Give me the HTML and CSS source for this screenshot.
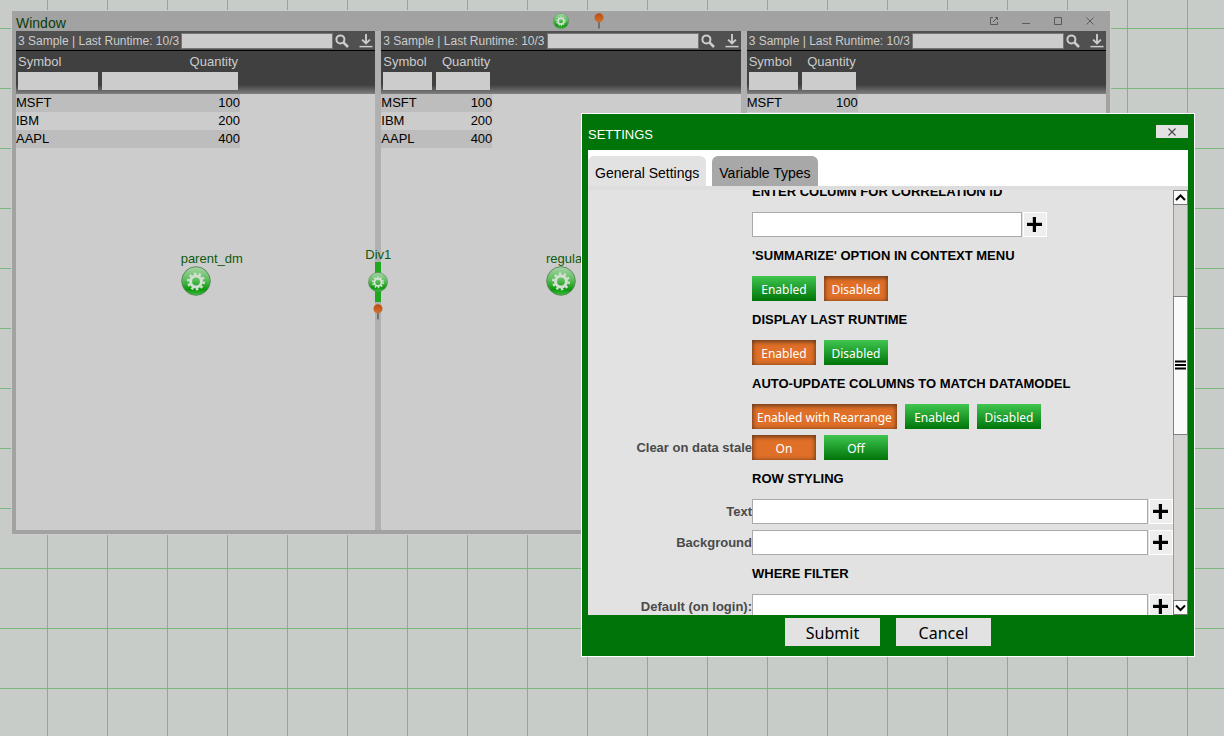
FILE: index.html
```html
<!DOCTYPE html>
<html lang="en">
<head>
<meta charset="utf-8">
<title>Window</title>
<link rel="stylesheet" href="styles.css">
</head>
<body>
<svg class="defs" aria-hidden="true">
  <defs>
    <linearGradient id="green" x1="0" y1="0" x2="0" y2="1">
      <stop offset="0" stop-color="#a9d3a9"/>
      <stop offset=".45" stop-color="#5bc05b"/>
      <stop offset=".8" stop-color="#0c980c"/>
      <stop offset="1" stop-color="#3fc03f"/>
    </linearGradient>
    <linearGradient id="orange" x1="0" y1="0" x2="0" y2="1">
      <stop offset="0" stop-color="#bd4a10"/>
      <stop offset="1" stop-color="#d2722f"/>
    </linearGradient>
    <symbol id="gear" viewBox="0 0 30 30">
      <circle cx="15" cy="15" r="14.3" fill="url(#green)" stroke="#5f8a5f" stroke-width="1"/>
      <circle cx="15" cy="15.5" r="5.4" fill="none" stroke="#d3dfd3" stroke-width="3"/>
      <circle cx="15" cy="15.5" r="7.7" fill="none" stroke="#d3dfd3" stroke-width="2.6" stroke-dasharray="2.42 2.42"/>
    </symbol>
    <symbol id="pin" viewBox="0 0 10 16">
      <path d="M5 8V15.5" stroke="#5a5a5a" stroke-width="1.4"/>
      <circle cx="5" cy="4.8" r="4.5" fill="url(#orange)"/>
    </symbol>
    <symbol id="search" viewBox="0 0 14 14">
      <circle cx="5.4" cy="5.4" r="4" fill="none" stroke="currentColor" stroke-width="2"/>
      <path d="M8.4 8.4L13 13" stroke="currentColor" stroke-width="2.6"/>
    </symbol>
    <symbol id="download" viewBox="0 0 14 15">
      <path d="M7 0V10M2.8 6L7 10.2L11.2 6" fill="none" stroke="currentColor" stroke-width="2"/>
      <path d="M0 13.5H14" stroke="currentColor" stroke-width="1.6"/>
    </symbol>
    <symbol id="plus" viewBox="0 0 16 16">
      <path d="M7 0V15M0 7H15" stroke="#bbb" stroke-width="4"/>
      <path d="M7.5 0V15M0 7.5H15" stroke="#000" stroke-width="3"/>
    </symbol>
    <symbol id="close" viewBox="0 0 8 8">
      <path d="M.5 .5L7.5 7.5M7.5 .5L.5 7.5" stroke="currentColor" stroke-width="1.1"/>
    </symbol>
  </defs>
</svg>

<main class="desktop">
  <section class="window" aria-label="Window">
    <header class="titlebar">
      <span>Window</span>
      <div class="title-tools">
        <svg class="gear-small"><use href="#gear"/></svg>
        <svg class="pin"><use href="#pin"/></svg>
      </div>
      <div class="controls">
        <button type="button" aria-label="Pop out"><svg viewBox="0 0 10 10"><path d="M4 1.5H1.5V8.5H8.5V6M6 1.5H8.5V4M8.5 1.5L4 6" fill="none" stroke="currentColor"/></svg></button>
        <button type="button" aria-label="Minimize"><svg viewBox="0 0 10 10"><path d="M1 7.5H9" stroke="currentColor"/></svg></button>
        <button type="button" aria-label="Maximize"><svg viewBox="0 0 10 10"><path d="M1.5 1.5H8.5V8.5H1.5Z" fill="none" stroke="currentColor"/></svg></button>
        <button type="button" aria-label="Close window"><svg viewBox="0 0 10 10"><path d="M1.5 1.5L8.5 8.5M8.5 1.5L1.5 8.5" stroke="currentColor"/></svg></button>
      </div>
    </header>
    <div class="panels">
      <article class="panel">
        <div class="panel-head">
          <span class="panel-title">3 Sample | Last Runtime: 10/3</span>
          <input type="text" aria-label="Search">
          <button type="button" aria-label="Find"><svg><use href="#search"/></svg></button>
          <button type="button" aria-label="Download"><svg><use href="#download"/></svg></button>
        </div>
        <div class="grid-area">
          <table class="data wide">
            <thead>
              <tr><th>Symbol</th><th class="num">Quantity</th></tr>
              <tr><td><input type="text" aria-label="Filter symbol"></td><td><input type="text" aria-label="Filter quantity"></td></tr>
            </thead>
            <tbody>
              <tr><td>MSFT</td><td class="num">100</td></tr>
              <tr><td>IBM</td><td class="num">200</td></tr>
              <tr><td>AAPL</td><td class="num">400</td></tr>
            </tbody>
          </table>
        </div>
        <div class="node"><span>parent_dm</span><svg class="gear-large"><use href="#gear"/></svg></div>
      </article>
      <div class="divider">
        <div class="divider-node">
          <span>Div1</span>
          <div class="grip"><svg class="gear-medium"><use href="#gear"/></svg></div>
          <svg class="pin"><use href="#pin"/></svg>
        </div>
      </div>
      <article class="panel">
        <div class="panel-head">
          <span class="panel-title">3 Sample | Last Runtime: 10/3</span>
          <input type="text" aria-label="Search">
          <button type="button" aria-label="Find"><svg><use href="#search"/></svg></button>
          <button type="button" aria-label="Download"><svg><use href="#download"/></svg></button>
        </div>
        <div class="grid-area">
          <table class="data">
            <thead>
              <tr><th>Symbol</th><th class="num">Quantity</th></tr>
              <tr><td><input type="text" aria-label="Filter symbol"></td><td><input type="text" aria-label="Filter quantity"></td></tr>
            </thead>
            <tbody>
              <tr><td>MSFT</td><td class="num">100</td></tr>
              <tr><td>IBM</td><td class="num">200</td></tr>
              <tr><td>AAPL</td><td class="num">400</td></tr>
            </tbody>
          </table>
        </div>
        <div class="node"><span>regular</span><svg class="gear-large"><use href="#gear"/></svg></div>
      </article>
      <div class="divider"></div>
      <article class="panel">
        <div class="panel-head">
          <span class="panel-title">3 Sample | Last Runtime: 10/3</span>
          <input type="text" aria-label="Search">
          <button type="button" aria-label="Find"><svg><use href="#search"/></svg></button>
          <button type="button" aria-label="Download"><svg><use href="#download"/></svg></button>
        </div>
        <div class="grid-area">
          <table class="data">
            <thead>
              <tr><th>Symbol</th><th class="num">Quantity</th></tr>
              <tr><td><input type="text" aria-label="Filter symbol"></td><td><input type="text" aria-label="Filter quantity"></td></tr>
            </thead>
            <tbody>
              <tr><td>MSFT</td><td class="num">100</td></tr>
            </tbody>
          </table>
        </div>
      </article>
    </div>
  </section>

  <section class="dialog" role="dialog" aria-labelledby="dialog-title">
    <header class="dialog-head">
      <span id="dialog-title">SETTINGS</span>
      <button type="button" aria-label="Close settings"><svg><use href="#close"/></svg></button>
    </header>
    <div class="tabs" role="tablist">
      <button type="button" role="tab" class="tab active" aria-selected="true">General Settings</button>
      <button type="button" role="tab" class="tab" aria-selected="false">Variable Types</button>
    </div>
    <div class="dialog-body">
      <div class="viewport">
        <form class="form">
          <label class="heading" for="correlation">ENTER COLUMN FOR CORRELATION ID</label>
          <div class="field">
            <input class="short" type="text" id="correlation">
            <button type="button" class="add" aria-label="Add correlation column"><svg><use href="#plus"/></svg></button>
          </div>
          <div class="heading">'SUMMARIZE' OPTION IN CONTEXT MENU</div>
          <div class="field toggles" role="group" aria-label="Summarize option">
            <button type="button" class="toggle">Enabled</button>
            <button type="button" class="toggle on" aria-pressed="true">Disabled</button>
          </div>
          <div class="heading">DISPLAY LAST RUNTIME</div>
          <div class="field toggles" role="group" aria-label="Display last runtime">
            <button type="button" class="toggle on" aria-pressed="true">Enabled</button>
            <button type="button" class="toggle">Disabled</button>
          </div>
          <div class="heading">AUTO-UPDATE COLUMNS TO MATCH DATAMODEL</div>
          <div class="field toggles" role="group" aria-label="Auto-update columns">
            <button type="button" class="toggle on" aria-pressed="true">Enabled with Rearrange</button>
            <button type="button" class="toggle">Enabled</button>
            <button type="button" class="toggle">Disabled</button>
          </div>
          <span class="label" id="stale">Clear on data stale</span>
          <div class="field toggles" role="group" aria-labelledby="stale">
            <button type="button" class="toggle on" aria-pressed="true">On</button>
            <button type="button" class="toggle">Off</button>
          </div>
          <div class="heading">ROW STYLING</div>
          <label class="label" for="row-text">Text</label>
          <div class="field">
            <input type="text" id="row-text">
            <button type="button" class="add" aria-label="Edit text style"><svg><use href="#plus"/></svg></button>
          </div>
          <label class="label" for="row-bg">Background</label>
          <div class="field">
            <input type="text" id="row-bg">
            <button type="button" class="add" aria-label="Edit background style"><svg><use href="#plus"/></svg></button>
          </div>
          <div class="heading">WHERE FILTER</div>
          <label class="label" for="where">Default (on login):</label>
          <div class="field">
            <input type="text" id="where">
            <button type="button" class="add" aria-label="Edit default filter"><svg><use href="#plus"/></svg></button>
          </div>
        </form>
      </div>
      <div class="scrollbar">
        <button type="button" aria-label="Scroll up"><svg viewBox="0 0 13 13"><path d="M2 9L6.5 4.5L11 9" fill="none" stroke="#000" stroke-width="2"/></svg></button>
        <div class="track before"></div>
        <div class="thumb"><svg viewBox="0 0 11 10"><path d="M0 1.5H11M0 5H11M0 8.5H11" stroke="#000" stroke-width="1.8"/></svg></div>
        <div class="track after"></div>
        <button type="button" aria-label="Scroll down"><svg viewBox="0 0 13 13"><path d="M2 4.5L6.5 9L11 4.5" fill="none" stroke="#000" stroke-width="2"/></svg></button>
      </div>
    </div>
    <footer class="dialog-foot">
      <button type="button">Submit</button>
      <button type="button">Cancel</button>
    </footer>
  </section>
</main>
</body>
</html>
```

FILE: styles.css
```css
* { box-sizing: border-box; }

body {
  margin: 0;
  font-family: "Liberation Sans", Arial, sans-serif;
  font-size: 13px;
  color: #000;
}

button, input { font: inherit; margin: 0; padding: 0; border: 0; border-radius: 0; }
button { background: none; color: inherit; }
svg { display: block; flex: none; }
.defs { position: absolute; width: 0; height: 0; }

.desktop {
  position: relative;
  height: 100vh;
  min-height: 680px;
  overflow: hidden;
  background-color: #c8ccc8;
  background-image:
    linear-gradient(90deg, #7ab87e 0 1px, transparent 1px 60px),
    linear-gradient(180deg, #7ab87e 0 1px, transparent 1px 60px);
  background-size: 60px 60px;
  background-position: 47px 28px;
}

/* Desktop window */
.window {
  position: absolute;
  top: 11px;
  left: 12px;
  right: 114px;
  bottom: 202px;
  display: flex;
  flex-direction: column;
  padding: 0 4px 4px;
  background: #a2a2a2;
  box-shadow: 0 0 0 1px #cacdca;
}

.titlebar {
  display: grid;
  grid-template-columns: 1fr auto 1fr;
  height: 20px;
  align-items: center;
  font-size: 14px;
  color: #0b3d0b;
}
.titlebar > span { padding-top: 4px; }
.title-tools { display: flex; align-items: center; gap: 25px; padding-left: 34px; }
.gear-small { width: 16px; height: 16px; }
.gear-medium { width: 20px; height: 20px; }
.gear-large { width: 30px; height: 30px; }
.pin { width: 10px; height: 16px; }
.controls { display: flex; justify-content: flex-end; gap: 22px; padding-right: 11px; color: #5c5c5c; }
.controls svg { width: 10px; height: 10px; }

.panels { display: flex; flex: 1; min-height: 0; }
.panel { position: relative; flex: 1; min-width: 0; background: #ccc; }

.panel-head {
  display: flex;
  align-items: center;
  height: 20px;
  padding: 0 2px;
  background: #505050;
  border-bottom: 1px solid #000;
  color: #ccc;
}
.panel-title { flex: 1; min-width: 0; overflow: hidden; white-space: nowrap; font-size: 12px; }
.panel-head input {
  width: 152px;
  height: 16px;
  background: #ccc;
  border: 1px solid #777;
}
.panel-head button { margin-left: 2px; }
.panel-head button + button { margin-left: 10px; }
.panel-head svg { width: 14px; height: 14px; }

.grid-area {
  background: linear-gradient(#404040 34px, #808080 43px) no-repeat;
  background-size: 100% 43px;
}
.data { width: 111px; table-layout: fixed; border-collapse: collapse; line-height: 18px; }
.data.wide { width: 224px; }
.data th, .data td { padding: 0; height: 18px; text-align: left; }
.data th { width: 53px; height: 21px; padding: 0 2px; font-weight: normal; color: #ccc; }
.data th + th { width: 58px; }
.data.wide th { width: 84px; }
.data.wide th + th { width: 140px; }
.data thead td { height: 22px; padding: 0 2px 4px; line-height: 0; }
.data input { width: 100%; height: 18px; background: #ccc; }
.data .num { text-align: right; }
.data tbody tr:nth-child(odd) { background: #bdbdbd; }

.divider { position: relative; z-index: 1; width: 6px; background: #b0b0b0; }

/* Model markers drawn over the panels */
.node {
  position: absolute;
  top: calc(50% - 30px);
  left: calc(50% - 15px);
  line-height: 15px;
  color: #0e5a0e;
}
.divider-node {
  position: absolute;
  top: calc(50% - 34px);
  left: 50%;
  transform: translateX(-50%);
  display: flex;
  flex-direction: column;
  align-items: center;
  line-height: 15px;
  color: #0e5a0e;
}
.grip {
  display: flex;
  align-items: center;
  justify-content: center;
  width: 6px;
  height: 40px;
  margin-bottom: 2px;
  background: #1fa81f;
}

/* Settings dialog */
.dialog {
  position: absolute;
  z-index: 2;
  top: 113px;
  right: 29px;
  bottom: 79px;
  width: 614px;
  display: flex;
  flex-direction: column;
  padding: 0 6px;
  border: 1px solid #fff;
  background: #007409;
}
.dialog-head {
  display: flex;
  align-items: center;
  justify-content: space-between;
  height: 36px;
  padding-top: 4px;
  color: #fff;
}
.dialog-head button {
  display: flex;
  align-items: center;
  justify-content: center;
  width: 32px;
  height: 13px;
  margin-bottom: 5px;
  background: #e2e2e2;
  color: #444;
}
.dialog-head svg { width: 8px; height: 8px; }

.tabs {
  display: flex;
  gap: 6px;
  padding-top: 6px;
  background: #fff;
  border-bottom: 4px solid #ddd;
}
.tab {
  height: 30px;
  padding: 4px 7px 0;
  border-radius: 6px 6px 0 0;
  background: #a8a8a8;
  font-size: 14px;
}
.tab.active { background: #e2e2e2; }

.dialog-body { display: flex; flex: 1; min-height: 0; background: #e2e2e2; }
.viewport { flex: 1; min-width: 0; overflow: hidden; }
/* Scrolled position of the form */
.form {
  display: grid;
  grid-template-columns: 164px 1fr;
  row-gap: 6px;
  margin-top: -11px;
}
.heading { grid-column: 2; height: 27px; line-height: 25px; font-weight: bold; }
.label { line-height: 25px; text-align: right; font-weight: bold; color: #4a4a4a; }
.field { grid-column: 2; display: flex; gap: 1px; height: 25px; }
.field input { flex: 1; min-width: 0; background: #fff; border: 1px solid #aaa; }
.field input.short { flex: 0 0 270px; }
.add {
  display: flex;
  align-items: center;
  justify-content: center;
  width: 24px;
  background: #eee;
  border: 1px solid #fff;
}
.add svg { width: 16px; height: 16px; }

.toggles { gap: 8px; }
.toggle {
  min-width: 64px;
  padding: 2px 5px 0;
  background: linear-gradient(#40c650, #007409);
  color: #fff;
  font-family: "Noto Sans", Tahoma, sans-serif;
  font-size: 12px;
}
.toggle.on { background: #e07028; box-shadow: inset 0 1px 4px 1px #6b3a1a; }

.scrollbar { display: flex; flex-direction: column; width: 15px; }
.scrollbar button {
  display: flex;
  height: 15px;
  background: #fafafa;
  border: 1px solid #777;
}
.scrollbar button svg { width: 13px; height: 13px; }
.track { background: #d5d3d1; border: 1px solid #999; border-width: 0 1px; }
.before { flex: 91; }
.after { flex: 166; }
.thumb {
  display: flex;
  flex: 138;
  align-items: center;
  justify-content: center;
  background: #fafafa;
  border: 1px solid #808080;
}
.thumb svg { width: 11px; height: 10px; }

.dialog-foot { display: flex; justify-content: center; gap: 16px; padding: 3px 0 10px; }
.dialog-foot button {
  width: 95px;
  height: 28px;
  padding-top: 2px;
  background: #e2e2e2;
  font-family: "Noto Sans", Tahoma, sans-serif;
  font-size: 16px;
}
```
